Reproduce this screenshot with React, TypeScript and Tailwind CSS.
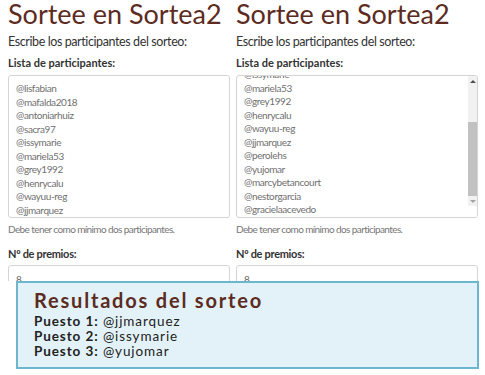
import React from "react";

const leftNames = [
  "@lisfabian",
  "@mafalda2018",
  "@antoniarhuiz",
  "@sacra97",
  "@issymarie",
  "@mariela53",
  "@grey1992",
  "@henrycalu",
  "@wayuu-reg",
  "@jjmarquez",
  "@perolehs",
];

const rightNames = [
  "@issymarie",
  "@mariela53",
  "@grey1992",
  "@henrycalu",
  "@wayuu-reg",
  "@jjmarquez",
  "@perolehs",
  "@yujomar",
  "@marcybetancourt",
  "@nestorgarcia",
  "@gracielaacevedo",
];

const results = ["@jjmarquez", "@issymarie", "@yujomar"];

const Scrollbar = () => (
  <div className="flex w-[9px] flex-col bg-[#f1f1f1]">
    <div className="flex h-[10px] items-center justify-center">
      <div className="h-0 w-0 border-x-[3px] border-b-[3px] border-x-transparent border-b-[#505050]" />
    </div>
    <div className="h-[36px]" />
    <div className="h-[74px] bg-[#c1c1c1]" />
    <div className="flex h-[10px] items-center justify-center">
      <div className="h-0 w-0 border-x-[3px] border-t-[3px] border-x-transparent border-t-[#a3a3a3]" />
    </div>
    <div className="flex-1 bg-white" />
  </div>
);

const Panel = ({ names, scrolled }: { names: string[]; scrolled?: boolean }) => (
  <div className="flex flex-col">
    <h1 className="h-[29px] text-[27px] leading-[27px] text-[#5c2b22]">Sortee en Sortea2</h1>
    <p className="mt-[5px] text-[12.5px] leading-[16px] tracking-[-0.4px] text-[#333]">
      Escribe los participantes del sorteo:
    </p>
    <p className="mt-[6px] text-[11px] font-bold leading-[14px] text-[#333]">Lista de participantes:</p>
    <div className="mt-[5px] flex h-[143px] overflow-hidden rounded-[3px] border border-[#d4d4d4]">
      <div className={`flex-1 overflow-hidden pl-[7px] ${scrolled ? "" : "pt-[6px]"}`}>
        <ul
          className={`flex flex-col text-[10px] leading-[13.5px] tracking-[-0.4px] text-[#707070] ${
            scrolled ? "-mt-[8px]" : ""
          }`}
        >
          {names.map((n) => (
            <li key={n}>{n}</li>
          ))}
        </ul>
      </div>
      {scrolled && <Scrollbar />}
    </div>
    <p className="mt-[4px] text-[10px] leading-[14px] tracking-[-0.6px] text-[#777]">
      Debe tener como mínimo dos participantes.
    </p>
    <p className="mt-[11px] text-[11px] font-bold leading-[14px] tracking-[-0.3px] text-[#333]">Nº de premios:</p>
    <div className="mt-[4px] h-[30px] rounded-[3px] border border-[#d4d4d4] pl-[7px] pt-[6px] text-[10px] text-[#666]">
      8
    </div>
  </div>
);

export default function App() {
  return (
    <div className="h-[375px] w-[485px] overflow-hidden bg-white font-['Lato',sans-serif]">
      <div className="flex h-[281px] overflow-hidden">
        <div className="w-[236px] pl-[8px] pr-[6px]">
          <Panel names={leftNames} />
        </div>
        <div className="w-[249px] pr-[7px]">
          <Panel names={rightNames} scrolled />
        </div>
      </div>
      <div className="ml-[16px] h-[88px] w-[463px] border-2 border-[#6cb7cd] bg-[#e3f2f8] pl-[16px] pt-[5px]">
        <h2 className="text-[20px] font-bold leading-[24px] tracking-[1.8px] text-[#5c2b22]">Resultados del sorteo</h2>
        <ul className="mt-[2px] flex flex-col text-[13.5px] leading-[15px] tracking-[0.9px] text-[#222]">
          {results.map((r, i) => (
            <li key={r}>
              <span className="font-bold">Puesto {i + 1}:</span> {r}
            </li>
          ))}
        </ul>
      </div>
    </div>
  );
}
